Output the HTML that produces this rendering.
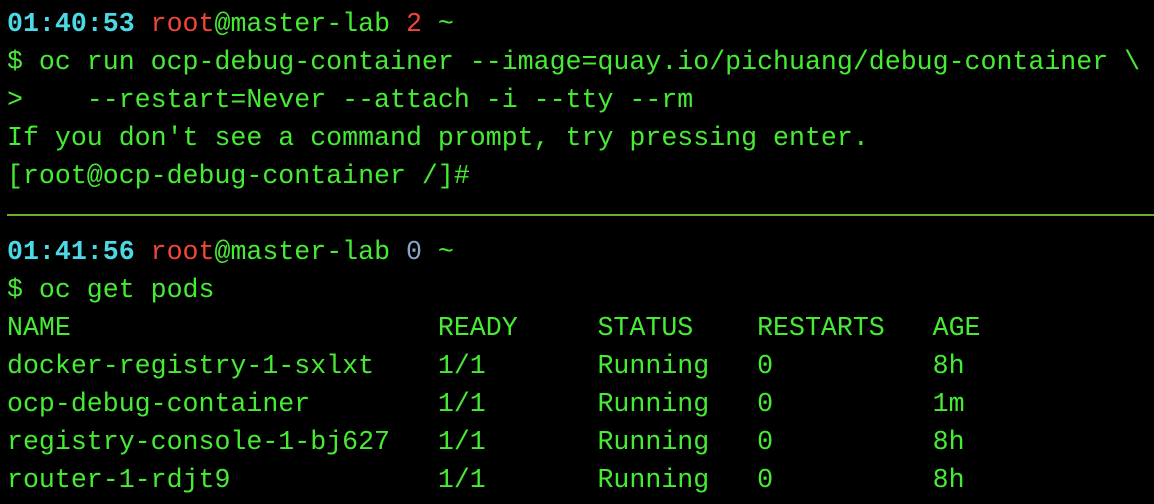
<!DOCTYPE html>
<html><head><style>
html,body{margin:0;padding:0;background:#000;width:1154px;height:504px;overflow:hidden}
pre{margin:0;position:absolute;left:7px;top:-33px;font-family:"Liberation Mono",monospace;font-size:26.6px;line-height:38px;color:#46ec34;white-space:pre}
.c{color:#4dd8e6;font-weight:bold}.r{color:#f2453b}.b{color:#8aa4c6}
.sep{position:absolute;left:7px;right:0;top:214px;height:2px;background:#6aae2a}
</style></head><body>
<pre> 
<span class="c">01:40:53</span> <span class="r">root</span>@master-lab <span class="r">2</span> ~
$ oc run ocp-debug-container --image=quay.io/pichuang/debug-container \
&gt;    --restart=Never --attach -i --tty --rm
If you don't see a command prompt, try pressing enter.
[root@ocp-debug-container /]#

<span class="c">01:41:56</span> <span class="r">root</span>@master-lab <span class="b">0</span> ~
$ oc get pods
NAME                       READY     STATUS    RESTARTS   AGE
docker-registry-1-sxlxt    1/1       Running   0          8h
ocp-debug-container        1/1       Running   0          1m
registry-console-1-bj627   1/1       Running   0          8h
router-1-rdjt9             1/1       Running   0          8h</pre>
<div class="sep"></div>
</body></html>
